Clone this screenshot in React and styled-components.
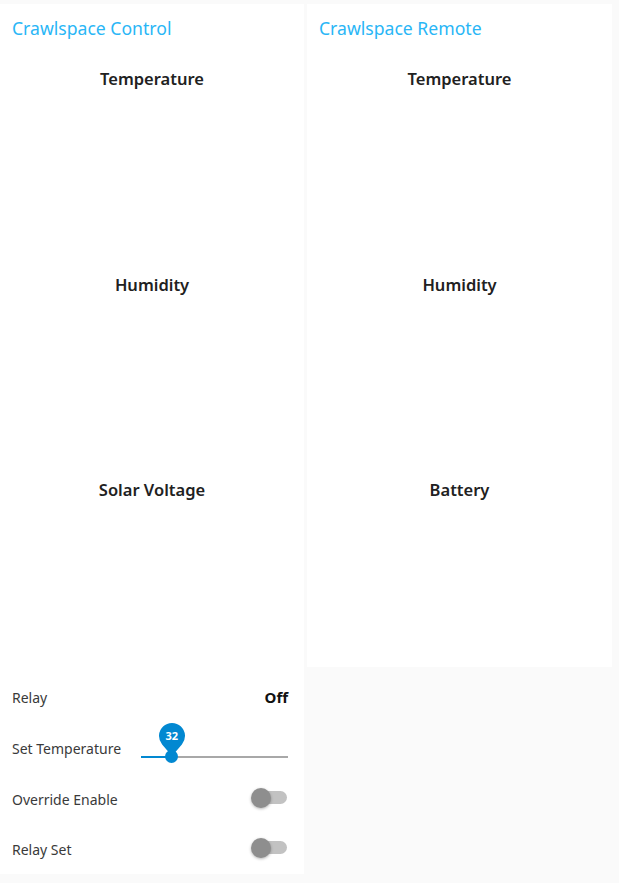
import styled, { createGlobalStyle } from "styled-components";

const GlobalStyle = createGlobalStyle`
  html, body {
    margin: 0;
    padding: 0;
    background: #fafafa;
    font-family: "Noto Sans", "Open Sans", sans-serif;
  }
`;

const controlGauges = ["Temperature", "Humidity", "Solar Voltage"];
const remoteGauges = ["Temperature", "Humidity", "Battery"];

const App = () => {
  return (
    <>
      <GlobalStyle />
      <Page>
        <Card>
          <CardTitle>Crawlspace Control</CardTitle>
          {controlGauges.map((name) => (
            <GaugeSection key={name}>
              <GaugeName>{name}</GaugeName>
            </GaugeSection>
          ))}
          <Rows>
            <Row>
              <Label>Relay</Label>
              <State>Off</State>
            </Row>
            <Row>
              <Label>Set Temperature</Label>
              <Slider value={21} label={32} />
            </Row>
            <Row>
              <Label>Override Enable</Label>
              <Toggle />
            </Row>
            <Row>
              <Label>Relay Set</Label>
              <Toggle />
            </Row>
          </Rows>
        </Card>
        <Card>
          <CardTitle>Crawlspace Remote</CardTitle>
          {remoteGauges.map((name) => (
            <GaugeSection key={name}>
              <GaugeName>{name}</GaugeName>
            </GaugeSection>
          ))}
        </Card>
      </Page>
    </>
  );
};

const Slider = ({ value, label }) => (
  <SliderBox>
    <Track>
      <Filled $pct={value} />
      <Thumb $pct={value}>
        <Pin>
          <svg width="28" height="34" viewBox="0 0 28 34">
            <path
              d="M14 34 L4.12 22.45 A13 13 0 1 1 23.88 22.45 Z"
              fill="#0288d1"
            />
          </svg>
          <PinText>{label}</PinText>
        </Pin>
      </Thumb>
    </Track>
  </SliderBox>
);

const Toggle = () => (
  <ToggleBox>
    <ToggleKnob />
  </ToggleBox>
);

const Page = styled.div`
  display: flex;
  align-items: flex-start;
  gap: 3px;
  padding-top: 4px;
`;

const Card = styled.div`
  width: 304px;
  background: #fff;
  display: flex;
  flex-direction: column;
  &:last-child {
    width: 305px;
  }
`;

const CardTitle = styled.div`
  padding: 12px 12px 10px;
  line-height: 24px;
  font-size: 17.6px;
  color: #29b6f6;
`;

const GaugeSection = styled.div`
  height: 205.5px;
  display: flex;
  justify-content: center;
`;

const GaugeName = styled.div`
  padding-top: 17px;
  line-height: 24px;
  font-size: 16.5px;
  font-weight: 600;
  color: #212121;
`;

const Rows = styled.div`
  display: flex;
  flex-direction: column;
  padding-top: 5px;
`;

const Row = styled.div`
  height: 51px;
  display: flex;
  align-items: center;
  justify-content: space-between;
  padding: 0 16px 0 12px;
  &:last-child {
    height: 49px;
  }
`;

const Label = styled.span`
  font-size: 14px;
  color: #3a3a3a;
`;

const State = styled.span`
  font-size: 15px;
  font-weight: 700;
  color: #111;
`;

const SliderBox = styled.div`
  width: 147px;
  height: 34px;
  padding-top: 17px;
  box-sizing: border-box;
  display: flex;
  align-items: center;
`;

const Track = styled.div`
  position: relative;
  width: 100%;
  height: 2px;
  background: #a8a8a8;
`;

const Filled = styled.div`
  position: absolute;
  left: 0;
  top: 0;
  height: 2px;
  width: ${(p) => p.$pct}%;
  background: #0288d1;
`;

const Thumb = styled.div`
  position: absolute;
  left: ${(p) => p.$pct}%;
  top: 1px;
  width: 13px;
  height: 13px;
  margin: -6.5px 0 0 -6.5px;
  border-radius: 50%;
  background: #0288d1;
`;

const Pin = styled.div`
  position: absolute;
  left: -7.5px;
  bottom: 7px;
  width: 28px;
  height: 34px;
  svg {
    display: block;
  }
`;

const PinText = styled.span`
  position: absolute;
  left: 0;
  top: 6px;
  width: 28px;
  text-align: center;
  line-height: 16px;
  font-size: 11px;
  font-weight: 700;
  color: #fff;
`;

const ToggleBox = styled.div`
  position: relative;
  width: 33px;
  height: 13px;
  border-radius: 7px;
  background: #c2c2c2;
  margin: 0 1px 3px 0;
`;

const ToggleKnob = styled.div`
  position: absolute;
  left: -3px;
  top: -3.5px;
  width: 20px;
  height: 20px;
  border-radius: 50%;
  background: #8e8e8e;
  box-shadow: 0 1px 3px rgba(0, 0, 0, 0.3);
`;

export default App;
